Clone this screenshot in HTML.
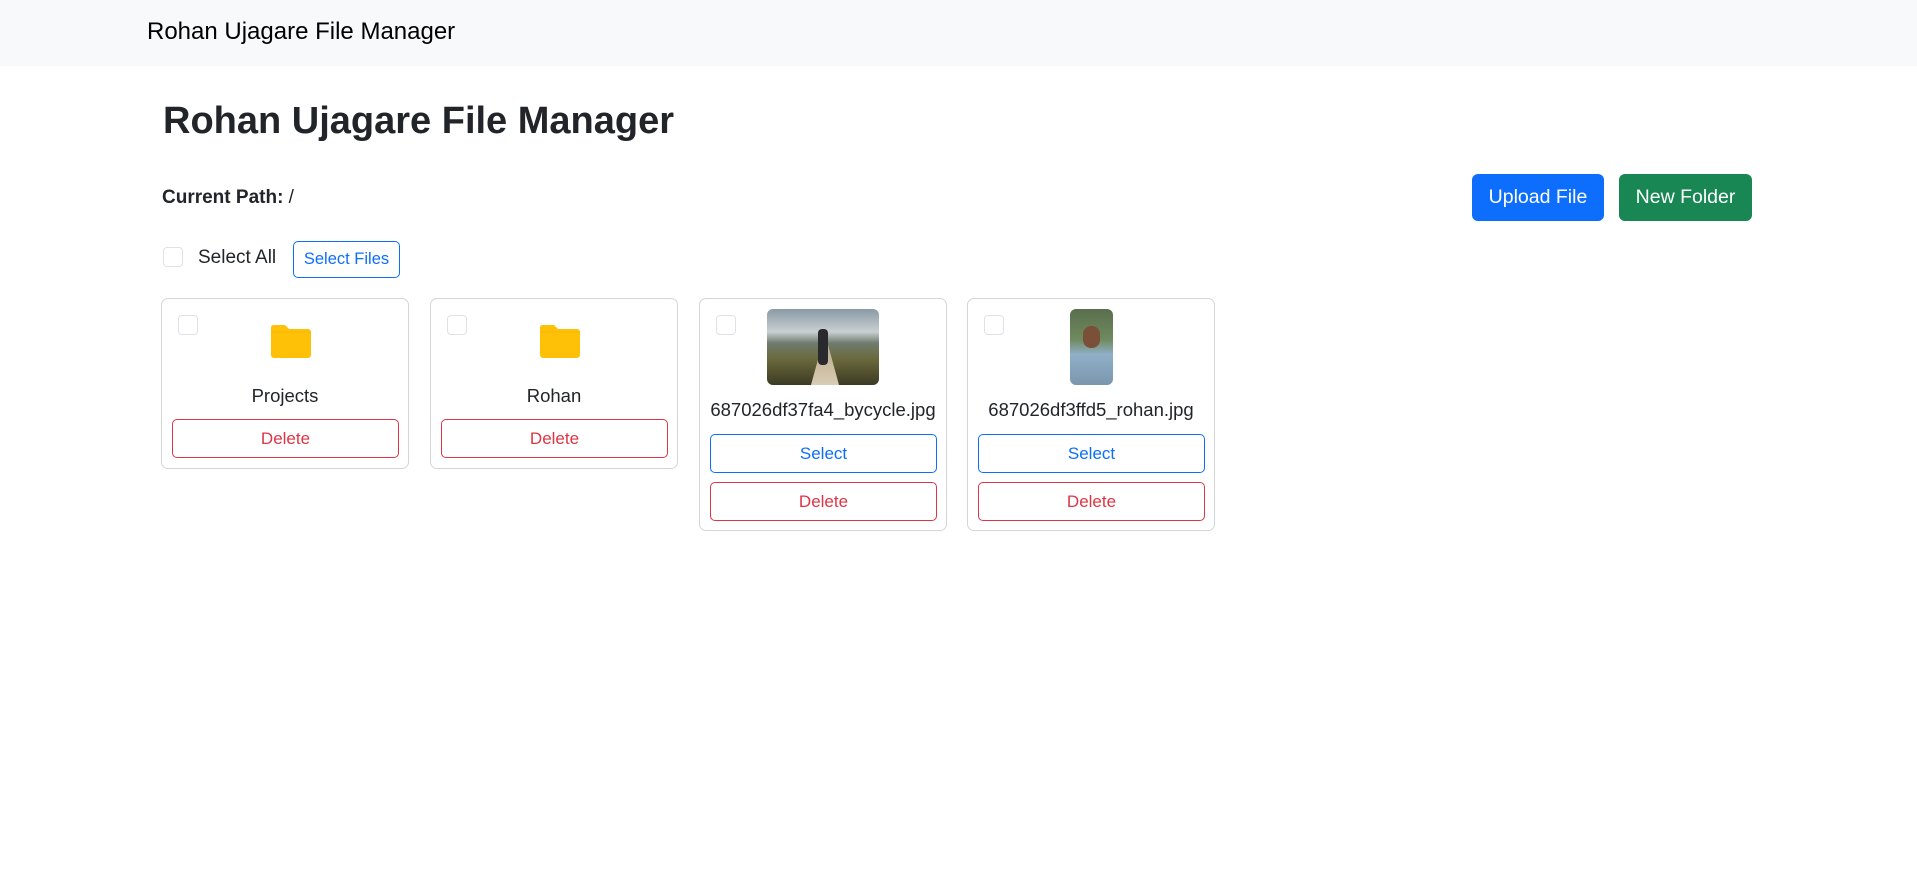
<!DOCTYPE html>
<html><head><meta charset="utf-8"><style>
*{box-sizing:border-box;margin:0;padding:0}
body{width:1917px;height:871px;background:#fff;font-family:"Liberation Sans",sans-serif;color:#212529;position:relative;overflow:hidden}
.nav{position:absolute;left:0;top:0;width:1917px;height:66px;background:#f8f9fa}
.a{position:absolute;white-space:nowrap}
.card{position:absolute;top:298px;width:248px;border:1.5px solid #d3d5d8;border-radius:7px;background:#fff}
.cb{position:absolute;width:20px;height:20px;border:1.5px solid #dee2e6;border-radius:4px;background:#fff}
.btn{position:absolute;left:10px;width:227px;height:39px;border:1.5px solid;border-radius:5px;font-size:17px;display:flex;align-items:center;justify-content:center;background:#fff}
.del{color:#dc3545;border-color:#dc3545}
.sel{color:#0d6efd;border-color:#0d6efd}
.name{position:absolute;left:0;width:100%;text-align:center;font-size:18.5px}
</style></head><body>
<div class="nav"></div>
<div class="a" style="left:147px;top:18px;font-size:24px;color:#000">Rohan Ujagare File Manager</div>
<div class="a" style="left:163px;top:100px;font-size:38px;font-weight:bold">Rohan Ujagare File Manager</div>
<div class="a" style="left:162px;top:187px;font-size:19px"><b>Current Path:</b> /</div>
<div class="a" style="left:1472px;top:174px;width:132px;height:47px;background:#0d6efd;color:#fff;border-radius:6px;font-size:19.5px;display:flex;align-items:center;justify-content:center">Upload File</div>
<div class="a" style="left:1619px;top:174px;width:133px;height:47px;background:#198754;color:#fff;border-radius:6px;font-size:19.5px;display:flex;align-items:center;justify-content:center">New Folder</div>
<div class="cb" style="left:163px;top:247px"></div>
<div class="a" style="left:198px;top:247px;font-size:19px">Select All</div>
<div class="a" style="left:293px;top:241px;width:107px;height:37px;border:1.5px solid #0d6efd;border-radius:5px;color:#0d6efd;font-size:16.5px;display:flex;align-items:center;justify-content:center">Select Files</div>

<div class="card" style="left:161px;height:171px">
<div class="cb" style="left:16px;top:16px"></div>
<svg class="a" style="left:108px;top:24px" width="42" height="36" viewBox="0 0 42 36"><path d="M3 2h12l4 4h19a3 3 0 0 1 3 3v23a3 3 0 0 1-3 3H4a3 3 0 0 1-3-3V5a3 3 0 0 1 2-3z" fill="#ffc107"/><path d="M1 9h40" stroke="#f5b800" stroke-width="1"/></svg>
<div class="name" style="top:86px">Projects</div>
<div class="btn del" style="top:120px">Delete</div>
</div>

<div class="card" style="left:430px;height:171px">
<div class="cb" style="left:16px;top:16px"></div>
<svg class="a" style="left:108px;top:24px" width="42" height="36" viewBox="0 0 42 36"><path d="M3 2h12l4 4h19a3 3 0 0 1 3 3v23a3 3 0 0 1-3 3H4a3 3 0 0 1-3-3V5a3 3 0 0 1 2-3z" fill="#ffc107"/><path d="M1 9h40" stroke="#f5b800" stroke-width="1"/></svg>
<div class="name" style="top:86px">Rohan</div>
<div class="btn del" style="top:120px">Delete</div>
</div>

<div class="card" style="left:699px;height:233px">
<div class="cb" style="left:16px;top:16px"></div>
<div class="a" style="left:67px;top:10px;width:112px;height:76px;border-radius:6px;overflow:hidden;background:linear-gradient(180deg,#8a9aa5 0%,#c9d0d2 30%,#6f7b6e 45%,#6b6a3c 65%,#3c3a24 100%)">
<div class="a" style="left:44px;top:35px;width:28px;height:41px;background:linear-gradient(180deg,#b9aa8e,#d8ccb4);clip-path:polygon(40% 0,60% 0,100% 100%,0 100%)"></div>
<div class="a" style="left:51px;top:20px;width:10px;height:36px;background:#2a2a2e;border-radius:4px"></div>
</div>
<div class="name" style="top:100px">687026df37fa4_bycycle.jpg</div>
<div class="btn sel" style="top:135px">Select</div>
<div class="btn del" style="top:183px">Delete</div>
</div>

<div class="card" style="left:967px;height:233px">
<div class="cb" style="left:16px;top:16px"></div>
<div class="a" style="left:102px;top:10px;width:43px;height:76px;border-radius:6px;overflow:hidden;background:linear-gradient(180deg,#5a6e4e 0%,#6f8a5e 40%,#8fb0c8 60%,#7a96ad 100%)">
<div class="a" style="left:13px;top:17px;width:17px;height:22px;background:#7a5038;border-radius:8px"></div>
</div>
<div class="name" style="top:100px">687026df3ffd5_rohan.jpg</div>
<div class="btn sel" style="top:135px">Select</div>
<div class="btn del" style="top:183px">Delete</div>
</div>
</body></html>
